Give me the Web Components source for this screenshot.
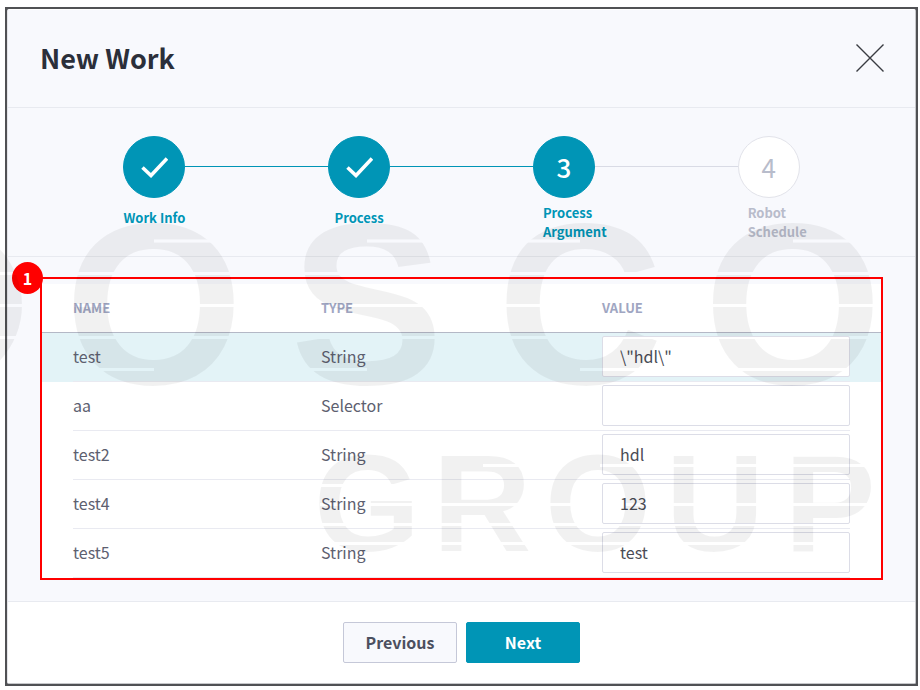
<!DOCTYPE html>
<html lang="en">
<head>
<meta charset="utf-8">
<title>New Work</title>
<style>
  body {
    margin: 0;
    background: #fff;
    font-family: "Noto Sans CJK KR", "Noto Sans", sans-serif;
    color: #2b2f3a;
  }
</style>
</head>
<body>
<work-dialog heading="New Work">
  <step-list slot="steps">
    <step-item state="done" number="1">Work Info</step-item>
    <step-item state="done" number="2">Process</step-item>
    <step-item state="current" number="3" long>Process Argument</step-item>
    <step-item number="4" long>Robot Schedule</step-item>
  </step-list>
  <callout-box number="1">
    <argument-table></argument-table>
  </callout-box>
  <work-button slot="actions">Previous</work-button>
  <work-button slot="actions" primary>Next</work-button>
</work-dialog>
<brand-watermark></brand-watermark>

<script>
class WorkDialog extends HTMLElement {
    constructor() {
        super();
        this.attachShadow({ mode: 'open' });
        this.shadowRoot.innerHTML = `
            <style>
                :host {
                    display: block;
                    padding: 7px 2px 4px 5px;
                }
                .frame {
                    background: #505154;
                    padding: 2px;
                }
                section {
                    background: #f8f9fd;
                    border: 1px solid #c6c7ca;
                    border-top-color: #fff;
                    border-left-color: #e4e5e9;
                    border-radius: 2px;
                }
                header {
                    display: flex;
                    align-items: center;
                    justify-content: space-between;
                    height: 95px;
                    padding: 0 30px 2px 32px;
                    border-bottom: 1px solid #e8eaf0;
                }
                h1 {
                    margin: 0;
                    font-size: 27px;
                    line-height: 40px;
                    font-weight: 700;
                }
                .close {
                    display: flex;
                    padding: 0;
                    border: 0;
                    background: none;
                    cursor: pointer;
                }
                .steps {
                    padding: 28px 44px 12px;
                    border-bottom: 1px solid #e8eaf0;
                }
                .content {
                    padding: 20px 32px 21px;
                }
                footer {
                    display: flex;
                    justify-content: center;
                    gap: 9px;
                    padding: 20px 0;
                    background: #fff;
                    border-top: 1px solid #e8eaf0;
                }
            </style>
            <div class="frame">
                <section role="dialog" aria-labelledby="heading">
                    <header>
                        <h1 id="heading"></h1>
                        <button class="close" type="button" aria-label="Close">
                            <svg width="30" height="30" viewBox="0 0 30 30" fill="none" stroke="#3a3c42" stroke-width="1.4">
                                <path d="M1.5 1.5 28.5 28.5M28.5 1.5 1.5 28.5"/>
                            </svg>
                        </button>
                    </header>
                    <div class="steps"><slot name="steps"></slot></div>
                    <div class="content"><slot></slot></div>
                    <footer><slot name="actions"></slot></footer>
                </section>
            </div>
        `;
    }

    connectedCallback() {
        this.shadowRoot.querySelector('h1').textContent = this.getAttribute('heading');
        this.shadowRoot.querySelector('.close').addEventListener('click', () => {
            this.hidden = true;
        });
    }
}

class StepList extends HTMLElement {
    constructor() {
        super();
        this.attachShadow({ mode: 'open' });
        this.shadowRoot.innerHTML = `
            <style>
                :host {
                    display: flex;
                }
                ::slotted(*) {
                    flex: 1;
                }
            </style>
            <slot></slot>
        `;
    }
}

class StepItem extends HTMLElement {
    constructor() {
        super();
        this.attachShadow({ mode: 'open' });
        this.shadowRoot.innerHTML = `
            <style>
                :host {
                    display: flex;
                    flex-direction: column;
                    align-items: center;
                    color: #b8bccb;
                }
                :host([state]) {
                    color: #0095b6;
                }
                .track {
                    display: flex;
                    align-items: center;
                    align-self: stretch;
                }
                .line {
                    flex: 1;
                    height: 1px;
                    margin-bottom: 1px;
                    background: #d9dbe5;
                }
                :host([state]) .before, :host([state=done]) .after {
                    background: #0095b6;
                }
                :host(:first-child) .before, :host(:last-child) .after {
                    background: none;
                }
                .dot {
                    display: flex;
                    align-items: center;
                    justify-content: center;
                    box-sizing: border-box;
                    width: 62px;
                    height: 62px;
                    border: 1px solid #e2e3ea;
                    border-radius: 50%;
                    background: #fff;
                    font-size: 26px;
                    line-height: 32px;
                }
                :host([state]) .dot {
                    border-color: #0095b6;
                    background: #0095b6;
                    color: #fff;
                    font-weight: 500;
                }
                .label {
                    box-sizing: border-box;
                    height: 46px;
                    padding-top: 10px;
                    font-size: 13px;
                    line-height: 19px;
                    font-weight: 700;
                }
                :host([long]) .label {
                    max-width: 82px;
                    padding-top: 5px;
                    padding-left: 20px;
                }
            </style>
            <div class="track">
                <span class="line before"></span>
                <span class="dot"></span>
                <span class="line after"></span>
            </div>
            <div class="label"><slot></slot></div>
        `;
    }

    connectedCallback() {
        const dot = this.shadowRoot.querySelector('.dot');
        if (this.getAttribute('state') == 'done') {
            dot.innerHTML = `
                <svg width="28" height="22" viewBox="0 0 28 22" fill="none" stroke="#fff" stroke-width="3.6">
                    <path d="M2.5 11.5 11 19.5 27 2.5"/>
                </svg>
            `;
        } else {
            dot.textContent = this.getAttribute('number');
        }
    }
}

class CalloutBox extends HTMLElement {
    constructor() {
        super();
        this.attachShadow({ mode: 'open' });
        this.shadowRoot.innerHTML = `
            <style>
                :host {
                    display: block;
                    position: relative;
                    border: 2px solid #f00;
                }
                .badge {
                    position: absolute;
                    top: -17px;
                    left: -30px;
                    width: 31px;
                    border-radius: 50%;
                    background: #f00;
                    color: #fff;
                    font-size: 16px;
                    line-height: 32px;
                    font-weight: 700;
                    text-align: center;
                }
            </style>
            <slot></slot>
            <span class="badge"></span>
        `;
    }

    connectedCallback() {
        this.shadowRoot.querySelector('.badge').textContent = this.getAttribute('number');
    }
}

class ArgumentTable extends HTMLElement {
    constructor() {
        super();
        this._rows = [
            ['test', 'String', '\\"hdl\\"'],
            ['aa', 'Selector', ''],
            ['test2', 'String', 'hdl'],
            ['test4', 'String', '123'],
            ['test5', 'String', 'test']
        ];
        this.attachShadow({ mode: 'open' });
        this.shadowRoot.innerHTML = `
            <style>
                :host {
                    display: block;
                    padding-top: 5px;
                }
                table {
                    width: 100%;
                    border-collapse: separate;
                    border-spacing: 0;
                    table-layout: fixed;
                    background: #fff;
                }
                .edge {
                    width: 31px;
                }
                .name, .value {
                    width: 248px;
                }
                th, td {
                    padding: 0;
                    text-align: left;
                    font-weight: 400;
                }
                th {
                    height: 48px;
                    border-bottom: 1px solid #b4b8c6;
                    color: #a0a6c2;
                    font-size: 13px;
                    line-height: 20px;
                    font-weight: 700;
                }
                td {
                    height: 46px;
                    padding-bottom: 2px;
                    border-bottom: 1px solid #e9eaf1;
                    color: #5d6070;
                    font-size: 16px;
                    line-height: 24px;
                }
                td:first-child, td:last-child {
                    border-bottom-color: transparent;
                }
                tbody tr:first-child td {
                    background: #e3f3f7;
                }
                input {
                    display: block;
                    box-sizing: border-box;
                    width: 100%;
                    height: 41px;
                    padding: 0 17px;
                    border: 1px solid #dcdde7;
                    border-radius: 2px;
                    background: #fff;
                    color: #4a4c55;
                    font: inherit;
                }
            </style>
            <table>
                <colgroup>
                    <col class="edge"><col class="name"><col><col class="value"><col class="edge">
                </colgroup>
                <thead>
                    <tr>
                        <th></th>
                        <th scope="col">NAME</th>
                        <th scope="col">TYPE</th>
                        <th scope="col">VALUE</th>
                        <th></th>
                    </tr>
                </thead>
                <tbody></tbody>
            </table>
        `;
    }

    connectedCallback() {
        const body = this.shadowRoot.querySelector('tbody');
        this._rows.forEach(([name, type, value]) => {
            const row = document.createElement('tr');
            row.innerHTML = `
                <td></td>
                <td>${name}</td>
                <td>${type}</td>
                <td><input type="text" aria-label="${name} value"></td>
                <td></td>
            `;
            row.querySelector('input').value = value;
            body.appendChild(row);
        });
    }
}

class WorkButton extends HTMLElement {
    constructor() {
        super();
        this.attachShadow({ mode: 'open' });
        this.shadowRoot.innerHTML = `
            <style>
                :host {
                    display: block;
                }
                button {
                    display: block;
                    width: 114px;
                    height: 41px;
                    padding: 0 0 2px;
                    border: 1px solid #c5c8d8;
                    border-radius: 2px;
                    background: #f8f9fd;
                    color: #4c5060;
                    font: inherit;
                    font-size: 16px;
                    line-height: 24px;
                    font-weight: 700;
                    cursor: pointer;
                }
                :host([primary]) button {
                    border-color: #0095b6;
                    background: #0095b6;
                    color: #fff;
                }
            </style>
            <button type="button"><slot></slot></button>
        `;
    }
}

class BrandWatermark extends HTMLElement {
    constructor() {
        super();
        this.attachShadow({ mode: 'open' });
        this.shadowRoot.innerHTML = `
            <style>
                :host {
                    display: block;
                    position: absolute;
                    top: 0;
                    left: 0;
                    width: 100%;
                    pointer-events: none;
                }
                svg {
                    display: block;
                    width: 100%;
                }
                text {
                    font-family: "Liberation Sans", Arial, sans-serif;
                    font-weight: 700;
                    text-anchor: middle;
                }
            </style>
            <svg viewBox="0 0 920 690" aria-hidden="true">
                <mask id="stripes" maskUnits="userSpaceOnUse" x="0" y="0" width="920" height="690">
                    <rect width="920" height="690" fill="#fff"/>
                    <path d="M0 273.5H920M0 305.5H920M0 337.5H920
                             M154 241H235M367 241H450M500 241H580M793 241H875
                             M73 369.5H154M289 369.5H367M580 369.5H660M712 369.5H875
                             M320 485.5H412M320 504.5H870M320 524.5H870M320 543.5H870
                             M483 465.5H530M600 465.5H640M670 465.5H870" stroke="#000" stroke-width="3"/>
                </mask>
                <g mask="url(#stripes)" opacity=".05">
                    <circle cx="-59" cy="305" r="67" fill="none" stroke="#000" stroke-width="28"/>
                    <text x="154 367 580 793" y="384" font-size="230">OSCO</text>
                    <text x="367 482 598 715 830" y="551" font-size="137">GROUP</text>
                </g>
            </svg>
        `;
    }
}

customElements.define('work-dialog', WorkDialog);
customElements.define('step-list', StepList);
customElements.define('step-item', StepItem);
customElements.define('callout-box', CalloutBox);
customElements.define('argument-table', ArgumentTable);
customElements.define('work-button', WorkButton);
customElements.define('brand-watermark', BrandWatermark);
</script>
</body>
</html>
